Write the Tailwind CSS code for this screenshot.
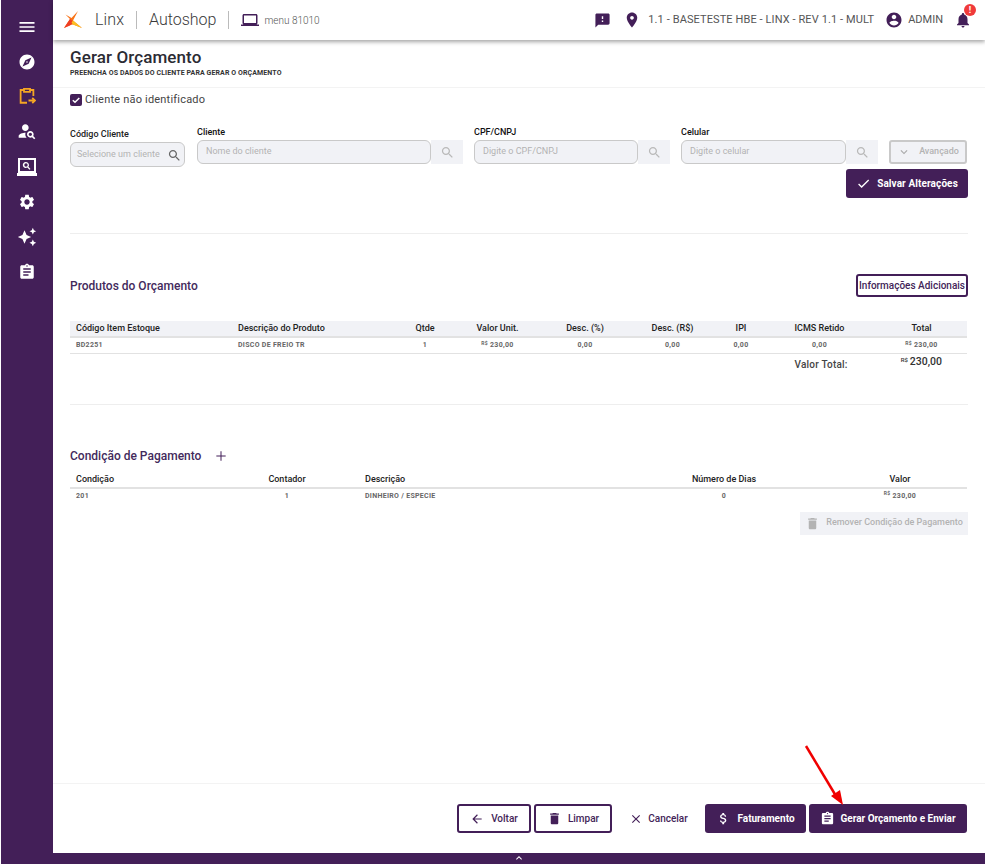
<!DOCTYPE html>
<html lang="pt-BR">
<head>
    <meta charset="UTF-8">
    <title>Gerar Orçamento</title>
    <script src="https://cdn.jsdelivr.net/npm/@tailwindcss/browser@4"></script>
</head>
<body class="bg-white font-['Roboto',sans-serif] w-[985px] h-[864px] overflow-hidden relative flex">
    <!-- Menu lateral -->
    <aside class="ml-px w-[52px] h-full bg-[#431f58] flex flex-col items-center pt-[17px] gap-[16px] shrink-0">
        <svg class="w-[20px] h-[20px] fill-white" viewBox="0 0 24 24"><path d="M3 18h18v-2H3v2zm0-5h18v-2H3v2zm0-7v2h18V6H3z"/></svg>
        <svg class="w-[18px] h-[18px] fill-white" viewBox="0 0 24 24"><path d="M12 10.9c-.61 0-1.1.49-1.1 1.1s.49 1.1 1.1 1.1c.61 0 1.1-.49 1.1-1.1s-.49-1.1-1.1-1.1zM12 2C6.48 2 2 6.48 2 12s4.48 10 10 10 10-4.48 10-10S17.52 2 12 2zm2.19 12.19L6 18l3.81-8.19L18 6l-3.81 8.19z"/></svg>
        <svg class="w-[18px] h-[18px] fill-none stroke-[#f5a623] stroke-[2.4]" viewBox="0 0 24 24"><path d="M8 4H3.5v17H12M16 4h4.500v8M8 2.500h8v4H8z"/><path d="M14 18h8M19 14.500l3.500 3.500-3.500 3.500"/></svg>
        <svg class="w-[20px] h-[20px] fill-white" viewBox="0 0 24 24"><path d="M10 12c2.21 0 4-1.79 4-4s-1.790-4-4-4-4 1.790-4 4 1.790 4 4 4z"/><path d="M10.350 14.010C7.620 13.910 2 15.270 2 18v2h9.540c-2.470-2.760-1.230-5.890-1.190-5.990z"/><path d="M19.430 18.020c.360-.590.570-1.280.570-2.020 0-2.210-1.790-4-4-4s-4 1.790-4 4 1.790 4 4 4c.740 0 1.430-.220 2.020-.570L20.590 22 22 20.590l-2.570-2.570zM16 18c-1.100 0-2-.9-2-2s.9-2 2-2 2 .9 2 2-.9 2-2 2z"/></svg>
        <svg class="w-[20px] h-[20px] fill-white" viewBox="0 0 20 20"><path fill-rule="evenodd" d="M1 1h18v15H1zM3 3v11h14V3z"/><path d="M0 16h20v3H0z"/><path fill-rule="evenodd" d="M9 5a3 3 0 0 1 2.400 4.800L13.500 12l-1 .8-2.200-2.200A3 3 0 1 1 9 5zm0 1.300a1.700 1.700 0 1 0 0 3.400 1.700 1.700 0 0 0 0-3.400z"/></svg>
        <svg class="w-[18px] h-[18px] fill-white" viewBox="0 0 24 24"><path d="M19.140 12.940c.040-.3.060-.610.060-.940 0-.320-.020-.640-.070-.940l2.030-1.580c.180-.140.230-.410.120-.610l-1.920-3.320c-.120-.220-.370-.290-.590-.220l-2.390.960c-.5-.380-1.030-.7-1.620-.940l-.360-2.540c-.040-.240-.240-.410-.480-.410h-3.840c-.240 0-.430.170-.470.410l-.360 2.540c-.590.240-1.130.570-1.620.940l-2.390-.960c-.220-.080-.470 0-.590.220L2.740 8.870c-.120.210-.080.470.120.610l2.030 1.580c-.050.3-.090.630-.090.940s.020.640.070.940l-2.030 1.580c-.180.140-.230.410-.120.610l1.920 3.320c.120.220.370.290.590.220l2.390-.960c.5.380 1.030.7 1.620.940l.360 2.540c.050.240.240.410.480.410h3.840c.240 0 .440-.170.470-.410l.360-2.540c.590-.240 1.130-.560 1.620-.940l2.390.960c.220.080.470 0 .590-.220l1.920-3.320c.120-.220.070-.470-.120-.610l-2.010-1.580zM12 15.600c-1.980 0-3.600-1.620-3.600-3.600s1.620-3.600 3.600-3.600 3.600 1.620 3.600 3.600-1.620 3.600-3.600 3.600z"/></svg>
        <svg class="w-[20px] h-[20px] fill-white" viewBox="0 0 24 24"><path d="M19 9l1.250-2.750L23 5l-2.750-1.250L19 1l-1.250 2.750L15 5l2.750 1.250L19 9zm-7.500.5L9 4 6.500 9.500 1 12l5.500 2.500L9 20l2.500-5.500L17 12l-5.500-2.500zM19 15l-1.250 2.750L15 19l2.750 1.250L19 23l1.250-2.750L23 19l-2.750-1.250L19 15z"/></svg>
        <svg class="w-[18px] h-[18px] fill-white" viewBox="0 0 24 24"><path d="M19 3h-4.180C14.400 1.840 13.300 1 12 1c-1.300 0-2.400.840-2.820 2H5c-1.100 0-2 .9-2 2v14c0 1.100.9 2 2 2h14c1.100 0 2-.9 2-2V5c0-1.100-.9-2-2-2zm-7 0c.550 0 1 .450 1 1s-.450 1-1 1-1-.450-1-1 .450-1 1-1zm2 14H7v-2h7v2zm3-4H7v-2h10v2zm0-4H7V7h10v2z"/></svg>
    </aside>

    <main class="flex-1 min-w-0 flex flex-col h-full">
        <!-- Topo -->
        <header class="h-[40px] shrink-0 bg-white shadow-[0_2px_4px_rgba(0,0,0,0.35)] flex items-center pl-[11px] pr-[11px] relative z-10">
            <svg class="w-[19px] h-[18px] mr-[12px]" viewBox="0 0 19 18"><path fill="#f97316" d="M0 17 6 8 1.500 3.500l6 3.500L14 0 9 9.500l9 7.500-9-3.500-3 .5z"/><path fill="#ef3e23" d="M0 17l6-9 4 3-4 3.500z"/><path fill="#fbbf24" d="M9 9.500l9 7.500-9-3.500-1.500-2z"/></svg>
            <span class="text-[16px] font-light text-[#3a3a3a] tracking-[0.1px]">Linx</span>
            <span class="w-px h-[18px] bg-[#bbb] mx-[12px]"></span>
            <span class="text-[16px] font-light text-[#3a3a3a]">Autoshop</span>
            <span class="w-px h-[18px] bg-[#bbb] mx-[12px]"></span>
            <svg class="w-[18px] h-[18px] fill-[#431f58] mr-[5px]" viewBox="0 0 24 24"><path d="M20 18c1.100 0 1.990-.9 1.990-2L22 6c0-1.100-.9-2-2-2H4c-1.100 0-2 .9-2 2v10c0 1.100.9 2 2 2H0v2h24v-2h-4zM4 6h16v10H4V6z"/></svg>
            <span class="text-[10px] text-[#555] font-light">menu 81010</span>

            <svg class="w-[17px] h-[17px] fill-[#431f58] ml-auto" viewBox="0 0 24 24"><path d="M20 2H4c-1.100 0-1.990.9-1.990 2L2 22l4-4h14c1.100 0 2-.9 2-2V4c0-1.100-.9-2-2-2zm-7 12h-2v-2h2v2zm0-4h-2V6h2v4z"/></svg>
            <svg class="w-[18px] h-[18px] fill-[#431f58] ml-[12px]" viewBox="0 0 24 24"><path d="M12 2C8.130 2 5 5.130 5 9c0 5.250 7 13 7 13s7-7.750 7-13c0-3.870-3.130-7-7-7zm0 9.500c-1.380 0-2.500-1.120-2.500-2.500s1.120-2.500 2.500-2.500 2.500 1.120 2.500 2.500-1.120 2.500-2.500 2.500z"/></svg>
            <span class="text-[11px] text-[#555] ml-[7px] tracking-[0.1px]">1.1 - BASETESTE HBE - LINX - REV 1.1 - MULT</span>
            <svg class="w-[18px] h-[18px] fill-[#431f58] ml-[11px]" viewBox="0 0 24 24"><path d="M12 2C6.480 2 2 6.480 2 12s4.480 10 10 10 10-4.480 10-10S17.520 2 12 2zm0 3c1.660 0 3 1.340 3 3s-1.340 3-3 3-3-1.340-3-3 1.340-3 3-3zm0 14.200c-2.500 0-4.710-1.280-6-3.220.030-1.990 4-3.080 6-3.080 1.990 0 5.970 1.090 6 3.080-1.290 1.940-3.500 3.220-6 3.220z"/></svg>
            <span class="text-[11px] text-[#555] ml-[5px]">ADMIN</span>
            <div class="relative ml-[11px] mr-[2px]">
                <svg class="w-[18px] h-[18px] fill-[#431f58] block" viewBox="0 0 24 24"><path d="M12 22c1.100 0 2-.9 2-2h-4c0 1.100.890 2 2 2zm6-6v-5c0-3.070-1.640-5.640-4.500-6.320V4c0-.830-.670-1.500-1.500-1.500s-1.500.670-1.500 1.500v.680C7.630 5.360 6 7.920 6 11v5l-2 2v1h16v-1l-2-2z"/></svg>
                <span class="absolute -top-[7px] -right-[4px] w-[12px] h-[12px] rounded-full bg-[#f03a3a] text-white text-[9px] font-bold leading-[12px] text-center">!</span>
            </div>
        </header>

        <!-- Conteudo -->
        <div class="flex-1 min-h-0 flex flex-col">
            <div class="h-[48px] shrink-0 border-b border-[#f3f3f3] pl-[17px] pt-[7px]">
                <h1 class="text-[17px] leading-[20px] font-medium text-[#2b2b33] tracking-[0.1px]">Gerar Orçamento</h1>
                <p class="text-[7px] leading-[10px] mt-[1px] font-bold text-[#333] uppercase tracking-[0.1px]">Preencha os dados do cliente para gerar o orçamento</p>
            </div>

            <div class="px-[17px]">
                <label class="flex items-center gap-[3px] mt-[5px] h-[14px]">
                    <svg class="w-[12px] h-[12px]" viewBox="0 0 12 12"><rect width="12" height="12" rx="2" fill="#431f58"/><path d="M2.800 6.200 5 8.300 9.300 4" fill="none" stroke="#fff" stroke-width="1.500"/></svg>
                    <span class="text-[11px] text-[#444] tracking-[0.2px]">Cliente não identificado</span>
                </label>

                <!-- Filtros do cliente -->
                <div class="flex items-start mt-[19px] h-[42px]">
                    <div class="w-[115px] mr-[12px] pt-[2px]">
                        <div class="text-[9px] leading-[12px] font-medium text-[#222]">Código Cliente</div>
                        <div class="mt-[2px] h-[25px] bg-[#f1f2f6] border border-[#c9c9c9] rounded-[6px] flex items-center pl-[6px] pr-[2px]">
                            <span class="text-[9px] text-[#b3b3b3]">Selecione um cliente</span>
                            <svg class="w-[15px] h-[15px] ml-auto mt-[2px] fill-[#666]" viewBox="0 0 24 24"><path d="M15.500 14h-.790l-.280-.270C15.410 12.590 16 11.110 16 9.500 16 5.910 13.090 3 9.500 3S3 5.910 3 9.500 5.910 16 9.500 16c1.610 0 3.090-.590 4.230-1.570l.270.280v.790l5 4.990L20.490 19l-4.990-5zm-6 0C7.010 14 5 11.990 5 9.500S7.010 5 9.500 5 14 7.010 14 9.500 11.990 14 9.500 14z"/></svg>
                        </div>
                    </div>
                    <div class="w-[266px] mr-[11px]">
                        <div class="text-[9px] leading-[12px] font-medium text-[#111]">Cliente</div>
                        <div class="mt-[2px] flex h-[24px]">
                            <div class="flex-1 bg-[#f1f2f6] border border-[#c9c9c9] rounded-[6px] flex items-center pl-[8px] text-[9px] text-[#b3b3b3]">Nome do cliente</div>
                            <div class="w-[32px] bg-[#f1f2f6] flex items-center justify-center"><svg class="w-[15px] h-[15px] fill-[#b9b9b9]" viewBox="0 0 24 24"><path d="M15.500 14h-.790l-.280-.270C15.410 12.590 16 11.110 16 9.500 16 5.910 13.090 3 9.500 3S3 5.910 3 9.500 5.910 16 9.500 16c1.610 0 3.090-.590 4.230-1.570l.270.280v.790l5 4.990L20.490 19l-4.990-5zm-6 0C7.010 14 5 11.990 5 9.500S7.010 5 9.500 5 14 7.010 14 9.500 11.990 14 9.500 14z"/></svg></div>
                        </div>
                    </div>
                    <div class="w-[196px] mr-[11px]">
                        <div class="text-[9px] leading-[12px] font-medium text-[#111]">CPF/CNPJ</div>
                        <div class="mt-[2px] flex h-[24px]">
                            <div class="flex-1 bg-[#f1f2f6] border border-[#c9c9c9] rounded-[6px] flex items-center pl-[8px] text-[9px] text-[#b3b3b3]">Digite o CPF/CNPJ</div>
                            <div class="w-[32px] bg-[#f1f2f6] flex items-center justify-center"><svg class="w-[15px] h-[15px] fill-[#b9b9b9]" viewBox="0 0 24 24"><path d="M15.500 14h-.790l-.280-.270C15.410 12.590 16 11.110 16 9.500 16 5.910 13.090 3 9.500 3S3 5.910 3 9.500 5.910 16 9.500 16c1.610 0 3.090-.590 4.230-1.570l.270.280v.790l5 4.990L20.490 19l-4.990-5zm-6 0C7.010 14 5 11.990 5 9.500S7.010 5 9.500 5 14 7.010 14 9.500 11.990 14 9.500 14z"/></svg></div>
                        </div>
                    </div>
                    <div class="w-[197px] mr-[11px]">
                        <div class="text-[9px] leading-[12px] font-medium text-[#111]">Celular</div>
                        <div class="mt-[2px] flex h-[24px]">
                            <div class="flex-1 bg-[#f1f2f6] border border-[#c9c9c9] rounded-[6px] flex items-center pl-[8px] text-[9px] text-[#b3b3b3]">Digite o celular</div>
                            <div class="w-[32px] bg-[#f1f2f6] flex items-center justify-center"><svg class="w-[15px] h-[15px] fill-[#b9b9b9]" viewBox="0 0 24 24"><path d="M15.500 14h-.790l-.280-.270C15.410 12.590 16 11.110 16 9.500 16 5.910 13.090 3 9.500 3S3 5.910 3 9.500 5.910 16 9.500 16c1.610 0 3.090-.590 4.230-1.570l.270.280v.790l5 4.990L20.490 19l-4.990-5zm-6 0C7.010 14 5 11.990 5 9.500S7.010 5 9.500 5 14 7.010 14 9.500 11.990 14 9.500 14z"/></svg></div>
                        </div>
                    </div>
                    <button class="w-[78px] h-[24px] mt-[14px] border-2 border-[#c9c9c9] rounded-[3px] bg-[#f1f2f6] flex items-center justify-center gap-[8px] text-[9px] font-medium text-[#b3b3b3]">
                        <svg class="w-[14px] h-[14px] fill-[#aaa]" viewBox="0 0 24 24"><path d="M16.590 8.590L12 13.170 7.410 8.590 6 10l6 6 6-6z"/></svg>Avançado
                    </button>
                </div>

                <div class="flex justify-end mt-[1px]">
                    <button class="w-[122px] h-[29px] bg-[#431f58] rounded-[3px] flex items-center justify-center gap-[6px] text-[10px] font-bold text-white tracking-[0.1px]">
                        <svg class="w-[15px] h-[15px] fill-white" viewBox="0 0 24 24"><path d="M9 16.170L4.830 12l-1.420 1.410L9 19 21 7l-1.410-1.410z"/></svg>Salvar Alterações
                    </button>
                </div>

                <div class="border-t border-[#eeeeee] mt-[35px]"></div>

                <!-- Produtos -->
                <div class="flex items-center justify-between mt-[40px] h-[23px]">
                    <h2 class="text-[12px] font-medium text-[#432a5c]">Produtos do Orçamento</h2>
                    <button class="w-[112px] h-[23px] border-2 border-[#431f58] rounded-[3px] bg-white text-[10px] font-medium text-[#431f58]">Informações Adicionais</button>
                </div>

                <table class="w-[897px] table-fixed mt-[24px] border-collapse">
                    <colgroup>
                        <col class="w-[162px]"><col class="w-[163px]"><col class="w-[60px]"><col class="w-[85px]"><col class="w-[90px]"><col class="w-[85px]"><col class="w-[52px]"><col class="w-[105px]"><col class="w-[95px]">
                    </colgroup>
                    <thead>
                        <tr class="h-[16px] bg-[#f1f2f6] border-b-2 border-[#e2e2e2] text-[9px] font-bold text-[#222]">
                            <th class="text-left pl-[6px] font-medium">Código Item Estoque</th>
                            <th class="text-left pl-[6px] font-medium">Descrição do Produto</th>
                            <th class="font-medium">Qtde</th>
                            <th class="font-medium">Valor Unit.</th>
                            <th class="font-medium">Desc. (%)</th>
                            <th class="font-medium">Desc. (R$)</th>
                            <th class="font-medium">IPI</th>
                            <th class="font-medium">ICMS Retido</th>
                            <th class="font-medium pl-[4px]">Total</th>
                        </tr>
                    </thead>
                    <tbody>
                        <tr class="h-[16px] border-b border-[#e2e2e2] text-[7px] font-bold text-[#666] tracking-[0.3px] text-center">
                            <td class="text-left pl-[6px]">BD2251</td>
                            <td class="text-left pl-[6px]">DISCO DE FREIO TR</td>
                            <td>1</td>
                            <td><sup class="text-[5px] mr-[2px]">R$</sup>230,00</td>
                            <td>0,00</td>
                            <td>0,00</td>
                            <td>0,00</td>
                            <td>0,00</td>
                            <td class="pl-[4px]"><sup class="text-[5px] mr-[2px]">R$</sup>230,00</td>
                        </tr>
                    </tbody>
                </table>
                <div class="flex justify-end h-[16px] text-[#333]">
                    <span class="text-[10px] mt-[3px] mr-[53px] font-medium tracking-[0.2px] text-[#444]">Valor Total:</span>
                    <span class="text-[10.500px] mr-[26px] font-medium"><sup class="text-[6px] mr-[2px]">R$</sup>230,00</span>
                </div>

                <div class="border-t border-[#eeeeee] mt-[34px]"></div>

                <!-- Pagamento -->
                <div class="flex items-center mt-[42px] h-[18px] gap-[12px]">
                    <h2 class="text-[12px] font-medium text-[#432a5c]">Condição de Pagamento</h2>
                    <svg class="w-[16px] h-[16px] fill-[#431f58]" viewBox="0 0 24 24"><path d="M19 12.750h-6.250V19h-1.500v-6.250H5v-1.500h6.250V5h1.500v6.250H19z"/></svg>
                </div>
                <table class="w-[897px] table-fixed mt-[8px] border-collapse">
                    <colgroup>
                        <col class="w-[145px]"><col class="w-[144px]"><col class="w-[256px]"><col class="w-[218px]"><col class="w-[134px]">
                    </colgroup>
                    <thead>
                        <tr class="h-[15px] border-b-2 border-[#e2e2e2] text-[9px] text-[#222]">
                            <th class="text-left pl-[6px] font-medium">Condição</th>
                            <th class="font-medium">Contador</th>
                            <th class="text-left pl-[6px] font-medium">Descrição</th>
                            <th class="font-medium">Número de Dias</th>
                            <th class="font-medium">Valor</th>
                        </tr>
                    </thead>
                    <tbody>
                        <tr class="h-[16px] text-[7px] font-bold text-[#666] tracking-[0.3px] text-center">
                            <td class="text-left pl-[6px]">201</td>
                            <td>1</td>
                            <td class="text-left pl-[6px]">DINHEIRO / ESPECIE</td>
                            <td>0</td>
                            <td><sup class="text-[5px] mr-[2px]">R$</sup>230,00</td>
                        </tr>
                    </tbody>
                </table>
                <div class="flex justify-end mt-[8px]">
                    <button class="w-[168px] h-[23px] bg-[#f1f2f6] flex items-center justify-center gap-[6px] text-[9px] font-medium text-[#b3b3b3]">
                        <svg class="w-[15px] h-[15px] fill-[#b3b3b3]" viewBox="0 0 24 24"><path d="M6 19c0 1.100.9 2 2 2h8c1.100 0 2-.9 2-2V7H6v12zM19 4h-3.500l-1-1h-5l-1 1H5v2h14V4z"/></svg>Remover Condição de Pagamento
                    </button>
                </div>
            </div>

            <!-- Rodape -->
            <div class="mt-auto h-[70px] shrink-0 border-t border-[#f3f3f3] flex items-start justify-end gap-[3px] pt-[20px] pr-[18px] text-[10px] font-medium">
                <button class="w-[74px] h-[29px] border-2 border-[#431f58] rounded-[3px] bg-white flex items-center justify-center gap-[7px] text-[#431f58]">
                    <svg class="w-[14px] h-[14px] fill-[#431f58]" viewBox="0 0 24 24"><path d="M20 11H7.830l5.590-5.590L12 4l-8 8 8 8 1.410-1.410L7.830 13H20v-2z"/></svg>Voltar
                </button>
                <button class="w-[78px] h-[29px] border-2 border-[#431f58] rounded-[3px] bg-white flex items-center justify-center gap-[6px] text-[#431f58]">
                    <svg class="w-[15px] h-[15px] fill-[#431f58]" viewBox="0 0 24 24"><path d="M6 19c0 1.100.9 2 2 2h8c1.100 0 2-.9 2-2V7H6v12zM19 4h-3.500l-1-1h-5l-1 1H5v2h14V4z"/></svg>Limpar
                </button>
                <button class="w-[87px] h-[29px] flex items-center justify-center gap-[5px] text-[#431f58]">
                    <svg class="w-[14px] h-[14px] fill-[#431f58]" viewBox="0 0 24 24"><path d="M19 6.410L17.590 5 12 10.590 6.410 5 5 6.410 10.590 12 5 17.590 6.410 19 12 13.410 17.590 19 19 17.590 13.410 12z"/></svg>Cancelar
                </button>
                <button class="w-[101px] h-[29px] bg-[#431f58] rounded-[3px] flex items-center justify-center gap-[6px] text-white font-bold">
                    <svg class="w-[15px] h-[15px] fill-white" viewBox="0 0 24 24"><path d="M11.800 10.900c-2.270-.590-3-1.200-3-2.150 0-1.090 1.010-1.850 2.700-1.850 1.780 0 2.440.850 2.500 2.100h2.210c-.070-1.720-1.120-3.300-3.210-3.810V3h-3v2.160c-1.940.420-3.500 1.680-3.500 3.610 0 2.310 1.910 3.460 4.700 4.130 2.500.6 3 1.480 3 2.410 0 .690-.490 1.790-2.700 1.790-2.060 0-2.870-.920-2.980-2.100h-2.200c.120 2.190 1.760 3.420 3.680 3.830V21h3v-2.150c1.950-.370 3.500-1.500 3.500-3.550 0-2.840-2.430-3.810-4.700-4.400z"/></svg>Faturamento
                </button>
                <button class="w-[158px] h-[29px] bg-[#431f58] rounded-[3px] flex items-center justify-center gap-[5px] text-white font-bold">
                    <svg class="w-[15px] h-[15px] fill-white" viewBox="0 0 24 24"><path d="M19 3h-4.180C14.400 1.840 13.300 1 12 1c-1.300 0-2.400.840-2.820 2H5c-1.100 0-2 .9-2 2v14c0 1.100.9 2 2 2h14c1.100 0 2-.9 2-2V5c0-1.100-.9-2-2-2zm-7 0c.550 0 1 .450 1 1s-.450 1-1 1-1-.450-1-1 .450-1 1-1zm2 14H7v-2h7v2zm3-4H7v-2h10v2zm0-4H7V7h10v2z"/></svg>Gerar Orçamento e Enviar
                </button>
            </div>
            <div class="h-[11px] shrink-0 bg-[#431f58] flex justify-center overflow-hidden">
                <svg class="w-[12px] h-[12px] -mt-[1px] fill-white" viewBox="0 0 24 24"><path d="M12 8l-6 6 1.410 1.410L12 10.830l4.590 4.580L18 14z"/></svg>
            </div>
        </div>
    </main>

    <!-- Seta de anotacao sobre o botao -->
    <svg class="absolute left-[800px] top-[742px] w-[50px] h-[66px] pointer-events-none" viewBox="0 0 50 66"><path d="M6 4 36 54" stroke="#f00000" stroke-width="2.500" fill="none"/><path d="M43 63 31 54l9-6z" fill="#f00000"/></svg>
</body>
</html>
